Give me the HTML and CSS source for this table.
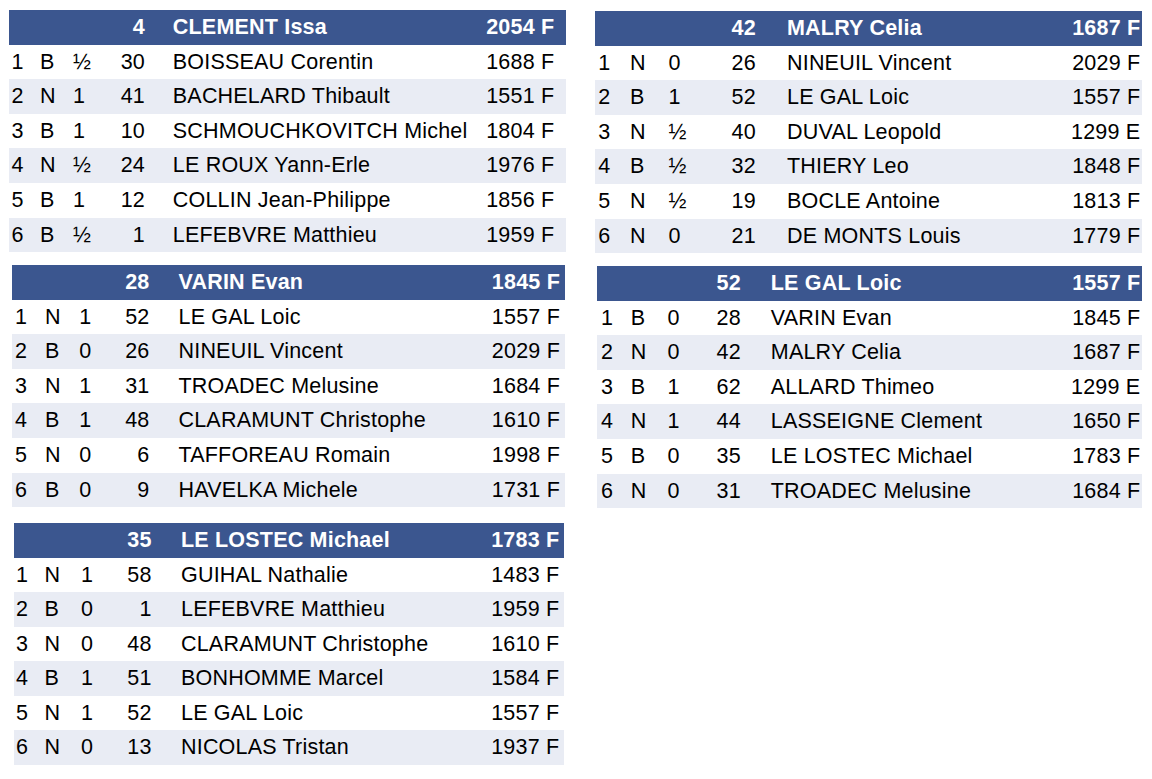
FILE: index.html
```html
<!DOCTYPE html>
<html lang="fr">
<head>
<meta charset="utf-8">
<title>Appariements</title>
<link rel="stylesheet" href="styles.css">
</head>
<body>
<div class="page">
  <div class="col col-left">
    <section class="card t1">
      <div class="row head"><span></span><span></span><span></span><span class="num">4</span><span class="name">CLEMENT Issa</span><span class="elo">2054 F</span></div>
      <div class="row"><span class="rd">1</span><span>B</span><span>½</span><span class="num">30</span><span class="name">BOISSEAU Corentin</span><span class="elo">1688 F</span></div>
      <div class="row"><span class="rd">2</span><span>N</span><span>1</span><span class="num">41</span><span class="name">BACHELARD Thibault</span><span class="elo">1551 F</span></div>
      <div class="row"><span class="rd">3</span><span>B</span><span>1</span><span class="num">10</span><span class="name">SCHMOUCHKOVITCH Michel</span><span class="elo">1804 F</span></div>
      <div class="row"><span class="rd">4</span><span>N</span><span>½</span><span class="num">24</span><span class="name">LE ROUX Yann-Erle</span><span class="elo">1976 F</span></div>
      <div class="row"><span class="rd">5</span><span>B</span><span>1</span><span class="num">12</span><span class="name">COLLIN Jean-Philippe</span><span class="elo">1856 F</span></div>
      <div class="row"><span class="rd">6</span><span>B</span><span>½</span><span class="num">1</span><span class="name">LEFEBVRE Matthieu</span><span class="elo">1959 F</span></div>
    </section>
    <section class="card t2">
      <div class="row head"><span></span><span></span><span></span><span class="num">28</span><span class="name">VARIN Evan</span><span class="elo">1845 F</span></div>
      <div class="row"><span class="rd">1</span><span>N</span><span>1</span><span class="num">52</span><span class="name">LE GAL Loic</span><span class="elo">1557 F</span></div>
      <div class="row"><span class="rd">2</span><span>B</span><span>0</span><span class="num">26</span><span class="name">NINEUIL Vincent</span><span class="elo">2029 F</span></div>
      <div class="row"><span class="rd">3</span><span>N</span><span>1</span><span class="num">31</span><span class="name">TROADEC Melusine</span><span class="elo">1684 F</span></div>
      <div class="row"><span class="rd">4</span><span>B</span><span>1</span><span class="num">48</span><span class="name">CLARAMUNT Christophe</span><span class="elo">1610 F</span></div>
      <div class="row"><span class="rd">5</span><span>N</span><span>0</span><span class="num">6</span><span class="name">TAFFOREAU Romain</span><span class="elo">1998 F</span></div>
      <div class="row"><span class="rd">6</span><span>B</span><span>0</span><span class="num">9</span><span class="name">HAVELKA Michele</span><span class="elo">1731 F</span></div>
    </section>
    <section class="card t3">
      <div class="row head"><span></span><span></span><span></span><span class="num">35</span><span class="name">LE LOSTEC Michael</span><span class="elo">1783 F</span></div>
      <div class="row"><span class="rd">1</span><span>N</span><span>1</span><span class="num">58</span><span class="name">GUIHAL Nathalie</span><span class="elo">1483 F</span></div>
      <div class="row"><span class="rd">2</span><span>B</span><span>0</span><span class="num">1</span><span class="name">LEFEBVRE Matthieu</span><span class="elo">1959 F</span></div>
      <div class="row"><span class="rd">3</span><span>N</span><span>0</span><span class="num">48</span><span class="name">CLARAMUNT Christophe</span><span class="elo">1610 F</span></div>
      <div class="row"><span class="rd">4</span><span>B</span><span>1</span><span class="num">51</span><span class="name">BONHOMME Marcel</span><span class="elo">1584 F</span></div>
      <div class="row"><span class="rd">5</span><span>N</span><span>1</span><span class="num">52</span><span class="name">LE GAL Loic</span><span class="elo">1557 F</span></div>
      <div class="row"><span class="rd">6</span><span>N</span><span>0</span><span class="num">13</span><span class="name">NICOLAS Tristan</span><span class="elo">1937 F</span></div>
    </section>
  </div>
  <div class="col col-right">
    <section class="card r1">
      <div class="row head"><span></span><span></span><span></span><span class="num">42</span><span class="name">MALRY Celia</span><span class="elo">1687 F</span></div>
      <div class="row"><span class="rd">1</span><span>N</span><span>0</span><span class="num">26</span><span class="name">NINEUIL Vincent</span><span class="elo">2029 F</span></div>
      <div class="row"><span class="rd">2</span><span>B</span><span>1</span><span class="num">52</span><span class="name">LE GAL Loic</span><span class="elo">1557 F</span></div>
      <div class="row"><span class="rd">3</span><span>N</span><span>½</span><span class="num">40</span><span class="name">DUVAL Leopold</span><span class="elo">1299 E</span></div>
      <div class="row"><span class="rd">4</span><span>B</span><span>½</span><span class="num">32</span><span class="name">THIERY Leo</span><span class="elo">1848 F</span></div>
      <div class="row"><span class="rd">5</span><span>N</span><span>½</span><span class="num">19</span><span class="name">BOCLE Antoine</span><span class="elo">1813 F</span></div>
      <div class="row"><span class="rd">6</span><span>N</span><span>0</span><span class="num">21</span><span class="name">DE MONTS Louis</span><span class="elo">1779 F</span></div>
    </section>
    <section class="card r2">
      <div class="row head"><span></span><span></span><span></span><span class="num">52</span><span class="name">LE GAL Loic</span><span class="elo">1557 F</span></div>
      <div class="row"><span class="rd">1</span><span>B</span><span>0</span><span class="num">28</span><span class="name">VARIN Evan</span><span class="elo">1845 F</span></div>
      <div class="row"><span class="rd">2</span><span>N</span><span>0</span><span class="num">42</span><span class="name">MALRY Celia</span><span class="elo">1687 F</span></div>
      <div class="row"><span class="rd">3</span><span>B</span><span>1</span><span class="num">62</span><span class="name">ALLARD Thimeo</span><span class="elo">1299 E</span></div>
      <div class="row"><span class="rd">4</span><span>N</span><span>1</span><span class="num">44</span><span class="name">LASSEIGNE Clement</span><span class="elo">1650 F</span></div>
      <div class="row"><span class="rd">5</span><span>B</span><span>0</span><span class="num">35</span><span class="name">LE LOSTEC Michael</span><span class="elo">1783 F</span></div>
      <div class="row"><span class="rd">6</span><span>N</span><span>0</span><span class="num">31</span><span class="name">TROADEC Melusine</span><span class="elo">1684 F</span></div>
    </section>
  </div>
</div>
</body>
</html>
```

FILE: styles.css
```css
html, body {
  margin: 0;
  padding: 0;
  background: #ffffff;
}

body {
  font-family: "Liberation Sans", Arial, sans-serif;
  font-size: 21.5px;
  letter-spacing: 0.2px;
  color: #000000;
}

.page {
  display: flex;
  align-items: flex-start;
  padding: 10px 0 0 9px;
}

.col {
  display: flex;
  flex-direction: column;
  align-items: flex-start;
}

.col-left {
  width: 557px;
}

.col-right {
  margin-left: 29px;
  padding-top: 1px;
}

.card {
  width: var(--w);
  display: flex;
  flex-direction: column;
}

.t1 {
  --w: 557px; --pl: 2.5px;
  --w1: 31px; --w2: 33px; --w3: 36px; --w4: 63.8px; --p4: 27.8px;
  --w6: 85px; --p6: 11.7px;
}

.t2 {
  margin: 12.8px 0 0 3px;
  --w: 553px; --pl: 3px;
  --w1: 33px; --w2: 34.3px; --w3: 36px; --w4: 63.2px; --p4: 29px;
  --w6: 85px; --p6: 5px;
}

.t3 {
  margin: 15.8px 0 0 5px;
  --w: 550px; --pl: 2px;
  --w1: 30.4px; --w2: 36.6px; --w3: 36px; --w4: 64px; --p4: 29.4px;
  --w6: 85px; --p6: 4.7px;
}

.r1 {
  --w: 547px; --pl: 3.3px;
  --w1: 35px; --w2: 38.4px; --w3: 36px; --w4: 82.6px; --p4: 31.2px;
  --w6: 85px; --p6: 1.7px;
}

.r2 {
  margin: 12.8px 0 0 2px;
  --w: 545px; --pl: 4px;
  --w1: 33.7px; --w2: 36.7px; --w3: 36px; --w4: 67.4px; --p4: 29.9px;
  --w6: 85px; --p6: 1.7px;
}

.row {
  display: grid;
  grid-template-columns: var(--w1) var(--w2) var(--w3) var(--w4) minmax(0, 1fr) var(--w6);
  height: 34.6px;
  line-height: 34.6px;
  white-space: nowrap;
  background: #ffffff;
}

.row > span {
  box-sizing: border-box;
  min-width: 0;
}

.row:nth-child(odd) {
  background: #e9ecf4;
}

.row.head {
  background: #3b568f;
  color: #ffffff;
  font-weight: bold;
}

.rd {
  padding-left: var(--pl);
}

.num {
  text-align: right;
  padding-right: var(--p4);
}

.name {
  overflow: visible;
}

.elo {
  text-align: right;
  padding-right: var(--p6);
}
```
